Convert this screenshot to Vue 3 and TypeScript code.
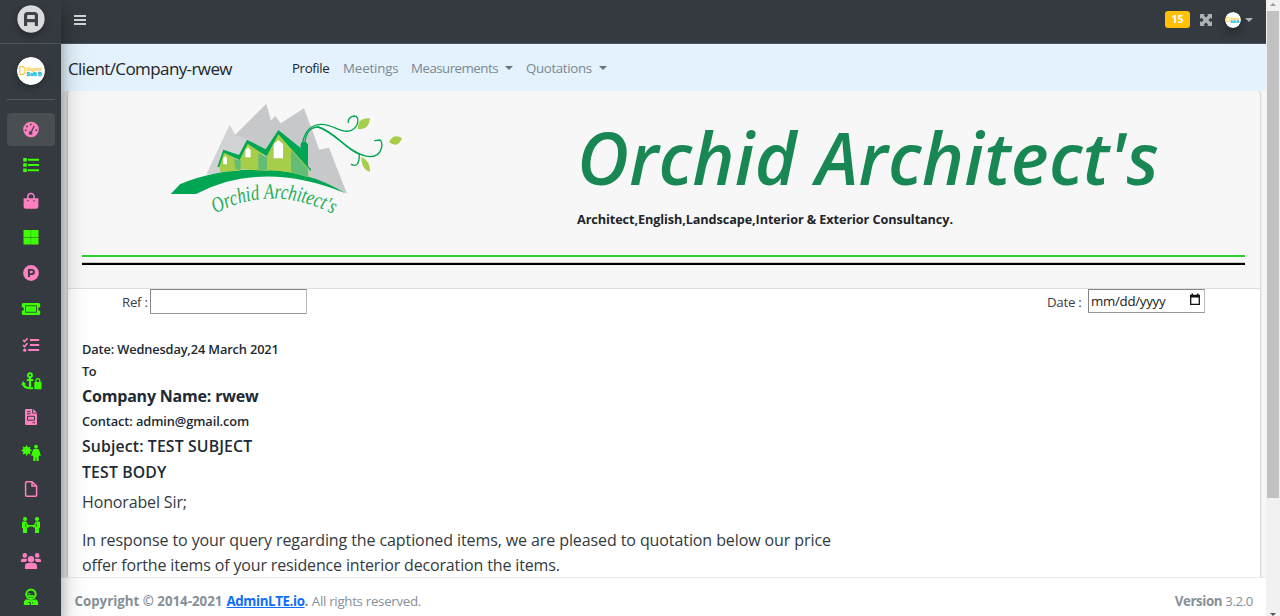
<script setup lang="ts">
interface NavItem { icon: string; active?: boolean }

const items: NavItem[] = [
  { icon: 'gauge', active: true },
  { icon: 'list' },
  { icon: 'bag' },
  { icon: 'grid' },
  { icon: 'parking' },
  { icon: 'ticket' },
  { icon: 'tasks' },
  { icon: 'anchor' },
  { icon: 'invoice' },
  { icon: 'burst' },
  { icon: 'file' },
  { icon: 'people' },
  { icon: 'users' },
  { icon: 'astronaut' },
]
</script>

<template>
  <div class="app">
    <aside class="sidebar">
      <div class="brand">
        <svg class="brand-logo" viewBox="0 0 28 28">
          <circle cx="14" cy="14" r="13.7" fill="#d9dadb" />
          <path d="M8.600 21V10.500q0-2 2-2h6.800q2 0 2 2V21M8.600 15.700h10.800" fill="none" stroke="#3d4247" stroke-width="3.200" />
        </svg>
      </div>
      <div class="user">
        <svg class="avatar" viewBox="0 0 28 28">
          <circle cx="14" cy="14" r="14" fill="#fff" />
          <text x="1.800" y="18" font-size="12" fill="#f5c518" textLength="7.500" lengthAdjust="spacingAndGlyphs">D</text>
          <text x="9.600" y="13.600" font-size="5.200" font-weight="700" fill="#f5c518" textLength="15.500" lengthAdjust="spacingAndGlyphs">iligent</text>
          <text x="9.600" y="18.900" font-size="5" font-weight="700" fill="#11b8d6" stroke="#11b8d6" stroke-width=".4" textLength="15" lengthAdjust="spacingAndGlyphs">Soft B</text>
        </svg>
      </div>
      <nav class="menu">
        <a v-for="(item, i) in items" :key="item.icon" class="item" :class="{ active: item.active, lime: i % 2 === 1 }">
          <svg class="icon" viewBox="0 0 22 18" fill="currentColor">
            <template v-if="item.icon === 'gauge'">
              <circle cx="11" cy="9.500" r="7.8" />
              <g fill="#494e53"><circle cx="5.7" cy="10.3" r="1" /><circle cx="7" cy="6.5" r="1" /><circle cx="10.7" cy="4.5" r="1" /><circle cx="16.3" cy="10.3" r="1" /><circle cx="10.6" cy="12.9" r="1.9" /></g>
              <path d="M11 12.500l3.200-6.6" stroke="#494e53" stroke-width="1.4" />
            </template>
            <template v-else-if="item.icon === 'list'">
              <path d="M3.2 2h3.6v3.6H3.2zM3.2 7.2h3.6v3.6H3.2zM3.2 12.4h3.6V16H3.2zM8 2.8h11v2H8zM8 8h11v2H8zM8 13.2h11v2H8z" />
            </template>
            <template v-else-if="item.icon === 'bag'">
              <path d="M3.6 6.2h14.8v8.3q0 2.300-2.300 2.300H5.900q-2.300 0-2.300-2.300z" /><path d="M7.9 8V4.600a3.1 3.1 0 0 1 6.2 0V8" fill="none" stroke="currentColor" stroke-width="1.500" /><circle cx="7.9" cy="8.7" r=".7" fill="#343a40" /><circle cx="14.1" cy="8.7" r=".7" fill="#343a40" />
            </template>
            <path v-else-if="item.icon === 'grid'" d="M3.5 2h7.300v7H3.5zM11.1 2h7.4v7h-7.4zM3.5 9.4h7.300v7.200H3.5zM11.1 9.4h7.4v7.200h-7.4z" />
            <template v-else-if="item.icon === 'parking'">
              <circle cx="11" cy="9" r="7.9" /><path d="M9 13V5.9h2.8a2.1 2.1 0 0 1 0 4.2H9" fill="none" stroke="#343a40" stroke-width="1.9" />
            </template>
            <template v-else-if="item.icon === 'ticket'">
              <path d="M3.4 3h15.2q1.6 0 1.6 1.6v2.3a2.1 2.1 0 0 0 0 4.2v2.3q0 1.6-1.6 1.6H3.4q-1.6 0-1.6-1.6v-2.3a2.1 2.1 0 0 0 0-4.2V4.600Q1.800 3 3.400 3z" /><path d="M5.500 5.700h11v6.600h-11z" fill="none" stroke="#343a40" stroke-width=".8" />
            </template>
            <template v-else-if="item.icon === 'tasks'">
              <path d="M10 2.900h9.200v2H10zM10 8h9.200v2H10zM8.300 13.100h10.900v2H8.300z" /><circle cx="4.800" cy="14.200" r="1.600" /><path d="M3 4l1.500 1.500 3-3.300M3 9.100l1.500 1.500 3-3.300" fill="none" stroke="currentColor" stroke-width="1.600" />
            </template>
            <template v-else-if="item.icon === 'anchor'">
              <g fill="none" stroke="currentColor"><circle cx="10" cy="3.200" r="2" stroke-width="1.900" /><path d="M10 5v10.500M6.800 8h6.400" stroke-width="2.100" /><path d="M3 11.200q.6 5 7 5h3" stroke-width="2.100" /><path d="M16 10.500v-2a1.900 1.900 0 0 1 3.800 0v2" stroke-width="1.300" /></g>
              <path d="M1 12.700l2.200-3.400 3 3.200zM14.300 10h7.200v7.200h-7.200z" />
            </template>
            <template v-else-if="item.icon === 'invoice'">
              <path d="M5 2.200Q5 1 6.200 1h6v4.500H17v10.300q0 1.200-1.200 1.200H6.200Q5 17 5 15.800zM13.200 1L17 4.700h-3.800z" /><path d="M7 3.600h3.500M7 5.700h3.500M12.500 14.700H15" stroke="#343a40" stroke-width=".9" /><path d="M7.500 8.300h7v3.900h-7z" fill="none" stroke="#343a40" stroke-width="1" />
            </template>
            <template v-else-if="item.icon === 'burst'">
              <path d="M6.700 1.100l1.300 2.300 2.500-1-.7 2.500 2.500 1.400-2.400 1.500.8 2.700-2.700-.9-1.300 2.600-1.300-2.600-2.900 1 .9-2.800L1 6.500l2.400-1.400-.8-2.700 2.700.9z" /><circle cx="16" cy="2.700" r="1.900" /><path d="M14.500 5h3q1.400 0 1.700 1.400l1.700 5.300h-2.200V17h-2.300v-3.500h-.8V17h-2.300v-5.300h-2.200l1.700-5.300Q13.100 5 14.500 5z" />
            </template>
            <path v-else-if="item.icon === 'file'" d="M5.600 3q0-1.200 1.200-1.200H12L16.600 6v9q0 1.200-1.200 1.200H6.800Q5.600 16.200 5.600 15zM12 1.800V6h4.600" fill="none" stroke="currentColor" stroke-width="1.500" />
            <template v-else-if="item.icon === 'people'">
              <circle cx="5" cy="3" r="2" /><circle cx="17" cy="3" r="2" /><path d="M2 6.500Q2 5.500 3 5.500h3.200l2 3.500h5.600l2-3.500H19q1 0 1 1V12h-1v5h-4v-5.500h-1.500l-1-1h-3l-1 1H7V17H3v-5H2z" /><path d="M5.800 7.400v3.500M16.200 7.400v3.500" stroke="#343a40" stroke-width=".8" />
            </template>
            <template v-else-if="item.icon === 'users'">
              <circle cx="4.800" cy="3.400" r="2.300" /><circle cx="17.200" cy="3.400" r="2.300" /><circle cx="11" cy="7.200" r="3.200" /><path d="M1 10V8.500Q1 6.800 2.700 6.800H6q1 0 1.100 1-.3 1.300-1.600 2.200zM21 10V8.500q0-1.700-1.700-1.700H16q-1 0-1.100 1 .3 1.300 1.600 2.200zM5 17v-2.600Q5 11 8.400 11h5.200q3.400 0 3.400 3.400V17z" />
            </template>
            <template v-else>
              <circle cx="11" cy="6.300" r="4.700" fill="none" stroke="currentColor" stroke-width="2" /><path d="M8 7.200h6v1.300q-3 2.200-6 0zM3.800 17v-1.600q0-3.400 3-4.200 4.200 2 8.400 0 3 .8 3 4.200V17z" /><path d="M8 6h2.500" stroke="currentColor" stroke-width="1" /><path d="M8.500 14.500h1.800V17M12 14.800h1" stroke="#343a40" stroke-width="1" fill="none" />
            </template>
          </svg>
        </a>
      </nav>
    </aside>

    <div class="main">
      <header class="topbar">
        <svg class="bars" viewBox="0 0 12 12"><path d="M0 1h12v1.900H0zM0 5h12v1.900H0zM0 9h12v1.900H0z" fill="#d1d3d5" /></svg>
        <div class="tools">
          <span class="badge">15</span>
          <svg class="expand" viewBox="0 0 12 12"><path d="M0 0h5L3.700 1.300 6 3.600l2.300-2.300L7 0h5v5l-1.300-1.300L8.400 6l2.300 2.300L12 7v5H7l1.300-1.300L6 8.400l-2.300 2.300L5 12H0V7l1.300 1.300L3.600 6 1.300 3.700 0 5z" fill="#aeb1b4" /></svg>
          <svg class="avatar small" viewBox="0 0 28 28">
            <circle cx="14" cy="14" r="14" fill="#fff" />
            <text x="1.800" y="18" font-size="12" fill="#f5c518" textLength="7.500" lengthAdjust="spacingAndGlyphs">D</text>
            <text x="9.600" y="13.600" font-size="5.200" font-weight="700" fill="#f5c518" textLength="15.500" lengthAdjust="spacingAndGlyphs">iligent</text>
            <text x="9.600" y="18.900" font-size="5" font-weight="700" fill="#11b8d6" stroke="#11b8d6" stroke-width=".4" textLength="15" lengthAdjust="spacingAndGlyphs">Soft B</text>
          </svg>
          <i class="caret light"></i>
        </div>
      </header>

      <nav class="subnav">
        <span class="title">Client/Company-rwew</span>
        <a class="link current">Profile</a>
        <a class="link meetings">Meetings</a>
        <a class="link measurements">Measurements<i class="caret"></i></a>
        <a class="link quotations">Quotations<i class="caret"></i></a>
      </nav>

      <main class="content">
        <section class="card">
          <div class="card-head">
            <div class="letterhead">
              <svg class="logo" viewBox="0 0 780 390">
                <path d="M140 238L209 90l16 30 94-94 14 51 13-14 16 22 70-45 46 124 29-6 54 138q-210-110-421-58z" fill="#c7c8ca" />
                <path d="M140 238L209 90l16 30 50 15-30 100z" fill="#d1d2d4" />
                <path d="M32 297l28-29Q160 225 290 223q150 0 266 72-140-58-270-49-90 5-178 51z" fill="#00a651" />
                <path d="M178 208l13-36 36 17 12 38-58 4zM238 187l25-47 44 34 16 54-82-5zM321 171l34-57 44 40 46 60v33q-64-22-124-20z" fill="#a6ce4b" />
                <path d="M222 192l20 4v30l-15-3zM295 175l26 12v39h-26zM393 165l51 58v24l-51-15z" fill="#64bd76" />
                <path d="M172 216l18-52 47 16 24-46 56 29 38-58 67 54v-13l5-5h10l7 7v66l9 8v7L355 118l-35 66-57-38-24 49-47-22-14 43z" fill="#00a651" />
                <path d="M190 208v-18l6-8 5 8v18zM256 187v-21l8-9 8 9v21zM341 190v-43l14-12 14 12v43z" fill="#fff" />
                <g fill="none" stroke="#00a651" stroke-width="4" stroke-linecap="round">
                  <path d="M427 145c8-38 24-56 55-57 38-2 60 30 92 18 25-12 24-44 9-43-11 1-20 9-18 19" />
                  <path d="M434 145c5-37 18-48 41-49 50 15 82 67 123 82 0 30-9 38-24 30" />
                  <path d="M475 96c50 15 97 84 154 89 41 0 42-47 30-50l-15 2" />
                </g>
                <path d="M594 102q-3-34 36-32-3 37-36 32zM687 141q13-26 39-12-12 33-39 12zM604 185q27 12 26 46-27-9-26-46z" fill="#a6ce4b" />
                <path id="arc" d="M166 356Q340 262 528 362" fill="none" />
                <text class="logo-text"><textPath href="#arc" textLength="368" lengthAdjust="spacingAndGlyphs">Orchid Architect's</textPath></text>
              </svg>
              <div class="firm">
                <h1>Orchid Architect's</h1>
                <p>Architect,English,Landscape,Interior &amp; Exterior Consultancy.</p>
              </div>
            </div>
            <div class="rule green"></div>
            <div class="rule black"></div>
          </div>
          <div class="card-body">
            <div class="fields">
              <span class="ref">Ref :</span><span class="box refbox"></span>
              <span class="date">Date :</span>
              <span class="box datebox"><span>mm/dd/yyyy</span><svg viewBox="0 0 12 13"><path d="M1.700 2.500h8.600v8.800H1.700z" fill="none" stroke="#111" stroke-width="1.300" /><path d="M1 2h10v2.500H1zM2.500.5H4V3H2.500zM8 .5h1.500V3H8z" fill="#111" /></svg></span>
            </div>
            <p class="row r-date"><span>Date: Wednesday,24 March 2021</span></p>
            <p class="row r-to"><span>To</span></p>
            <p class="row r-company"><span>Company Name: rwew</span></p>
            <p class="row r-contact"><span>Contact: admin@gmail.com</span></p>
            <p class="row r-subject"><span>Subject: TEST SUBJECT</span></p>
            <p class="row r-body"><span>TEST BODY</span></p>
            <p class="row r-sir"><span>Honorabel Sir;</span></p>
            <p class="letter"><span class="l1">In response to your query regarding the captioned items, we are pleased to quotation below our price</span><br><span class="l2">offer forthe items of your residence interior decoration the items.</span></p>
          </div>
        </section>
      </main>

      <footer class="footer">
        <span><b>Copyright © 2014-2021 <a>AdminLTE.io</a>.</b> <span class="rights">All rights reserved.</span></span>
        <span class="version"><b>Version</b> 3.2.0</span>
      </footer>
    </div>

    <div class="scrollbar"><i class="up"></i><div class="thumb"></div><i class="down"></i></div>
  </div>
</template>

<style>
body { margin: 0; overflow: hidden; }
</style>

<style scoped>
* { box-sizing: border-box; }
.app { display: flex; width: 1280px; height: 616px; overflow: hidden; background: #f4f6f9; color: #212529; font: 13.3px/20px "Open Sans", "Noto Sans", sans-serif; }
.sidebar { width: 61px; height: 616px; flex: none; position: relative; z-index: 2; background: #343a40; box-shadow: 0 14px 28px rgba(0,0,0,.25), 0 10px 10px rgba(0,0,0,.22); }
.brand { height: 44px; border-bottom: 1px solid #4b545c; padding: 5px 0 0 17px; }
.brand-logo { display: block; width: 28px; height: 28px; border-radius: 50%; box-shadow: 0 3px 7px rgba(0,0,0,.3); }
.user { height: 56px; margin: 0 6px 0 7px; padding: 13px 0 0 10px; border-bottom: 1px solid #4f5962; }
.avatar { display: block; width: 28px; height: 28px; border-radius: 50%; box-shadow: 0 3px 6px rgba(0,0,0,.25); font-family: "Liberation Sans", sans-serif; }
.menu { padding: 13px 6px 0 7px; }
.item { display: flex; align-items: center; justify-content: center; height: 33px; margin-bottom: 3px; border-radius: 4px; color: #ff80bf; }
.item.active { background: #494e53; }
.item.lime { color: #3cff00; }
.icon { width: 22px; height: 18px; margin-top: -1px; }
.main { width: 1205px; height: 616px; flex: none; display: flex; flex-direction: column; }
.topbar { height: 44px; flex: none; display: flex; justify-content: space-between; background: #343a40; border-bottom: 1px solid #4b545c; padding: 0 13px; }
.bars { width: 12px; height: 12px; margin-top: 14px; }
.tools { display: flex; align-items: flex-start; }
.badge { width: 25px; height: 17px; margin: 11px 10px 0 0; border-radius: 3px; background: #ffc107; color: #fff; font-weight: 700; font-size: 10.5px; line-height: 17px; text-align: center; }
.expand { width: 12px; height: 12px; margin: 14px 13px 0 0; }
.avatar.small { width: 16px; height: 16px; margin: 11.5px 4px 0 0; box-shadow: 0 5px 10px rgba(0,0,0,.3); }
.caret { display: inline-block; border: 4px solid transparent; border-top-color: currentColor; border-bottom: 0; margin-left: 7px; vertical-align: 3px; color: #68737c; }
.caret.light { margin: 18px 0 0; color: #adb1b4; }
.subnav { height: 46.5px; flex: none; display: flex; align-items: center; background: #e3f2fd; padding: 2px 0 0 7px; color: #7d8891; }
.title { width: 224px; padding-top: 1px; color: #212529; font-size: 17px; letter-spacing: -.6px; white-space: nowrap; }
.link { white-space: nowrap; }
.current { width: 51px; color: #212529; letter-spacing: -.4px; }
.meetings { width: 68px; letter-spacing: -.15px; }
.measurements { width: 115px; letter-spacing: -.52px; }
.quotations { letter-spacing: -.35px; }
.content { flex: 1; min-height: 0; overflow: hidden; padding: .5px 6px 0 7px; background: linear-gradient(90deg, #e4e5e9 7px, #f4f6f9 7px); }
.card { height: 520px; border-radius: 4px 4px 0 0; background: #fff; box-shadow: 0 0 1px rgba(0,0,0,.25), 0 0 2px 1px rgba(0,0,0,.12); }
.card-head { height: 198px; background: #f7f7f7; border-bottom: 1px solid #dfdfdf; padding: 0 15px 0 14px; border-radius: 4px 4px 0 0; }
.letterhead { display: flex; height: 164px; }
.logo { width: 260px; height: 130px; margin: 4px 0 0 78px; flex: none; overflow: visible; }
.logo-text { font: italic 65px "Liberation Serif", serif; fill: #23ad58; }
.firm { margin-left: 157px; }
h1 { margin: 24.5px 0 0; height: 84px; line-height: 84px; font-size: 71.5px; font-style: italic; font-weight: 650; letter-spacing: .27px; color: #198754; white-space: nowrap; }
.firm p { margin: 9.5px 0 0; font-weight: 700; font-size: 12.7px; letter-spacing: -.1px; white-space: nowrap; }
.rule.green { height: 2px; background: #32cd32; }
.rule.black { height: 3px; margin-top: 4.5px; background: #000; border-top: 1px solid #ccc; }
.card-body { padding: 0 14px; }
.fields { display: flex; height: 48.5px; padding-left: 40px; color: #3d4248; align-items: flex-start; }
.ref, .date { line-height: 26px; white-space: nowrap; letter-spacing: -.3px; }
.ref { width: 28px; }
.box { display: flex; align-items: center; background: #fff; border: 1px solid #858585; border-right-color: #bbb; border-bottom-color: #999; color: #222; }
.refbox { width: 157px; height: 25px; margin-right: 740px; border-radius: 1px; }
.date { width: 41px; }
.datebox { width: 117px; height: 23.5px; padding: 0 3px 0 2px; justify-content: space-between; letter-spacing: -.3px; }
.datebox svg { width: 12px; height: 13px; margin-top: -2px; }
.row { margin: 0; color: #202a34; white-space: nowrap; display: flex; align-items: center; }
.r-date { height: 22px; font-size: 12.8px; font-weight: 600; letter-spacing: -.14px; }
.r-to { height: 23px; font-size: 12.8px; font-weight: 600; letter-spacing: -.4px; }
.r-company { height: 27px; font-size: 16px; font-weight: 700; letter-spacing: -.2px; }
.r-contact { height: 22px; font-size: 12.8px; font-weight: 600; letter-spacing: -.09px; }
.r-subject { height: 28px; font-size: 15.8px; font-weight: 600; letter-spacing: .14px; }
.r-body { height: 25px; font-size: 15.8px; font-weight: 600; letter-spacing: .15px; }
.r-sir { height: 34px; font-size: 16px; color: #343a40; letter-spacing: -.14px; }
.letter { margin: 9.5px 0 0; font-size: 16px; line-height: 25px; color: #343a40; white-space: nowrap; }
.l1 { letter-spacing: -.095px; }
.l2 { letter-spacing: -.15px; }
.footer { height: 39px; flex: none; display: flex; justify-content: space-between; padding: 13px 13px 0 13.5px; background: #fff; border-top: 1px solid #e9ecef; color: #869099; position: relative; z-index: 1; white-space: nowrap; }
.footer a { margin-left: .6px; color: #0d6efd; text-decoration: underline; letter-spacing: -.37px; }
.rights { letter-spacing: -.3px; }
.version { letter-spacing: -.4px; }
.scrollbar { width: 14px; height: 616px; flex: none; background: #f1f1f1; position: relative; z-index: 3; display: flex; flex-direction: column; padding-left: 1px; }
.thumb { width: 12px; height: 487px; margin-top: 4.5px; background: #c1c1c1; }
.up { width: 0; margin: 3px 0 0 3px; border: 3px solid transparent; border-top: 0; border-bottom-color: #999; }
.down { width: 0; margin: auto 0 0 3px; border: 3px solid transparent; border-bottom: 0; border-top-color: #555; }
</style>
